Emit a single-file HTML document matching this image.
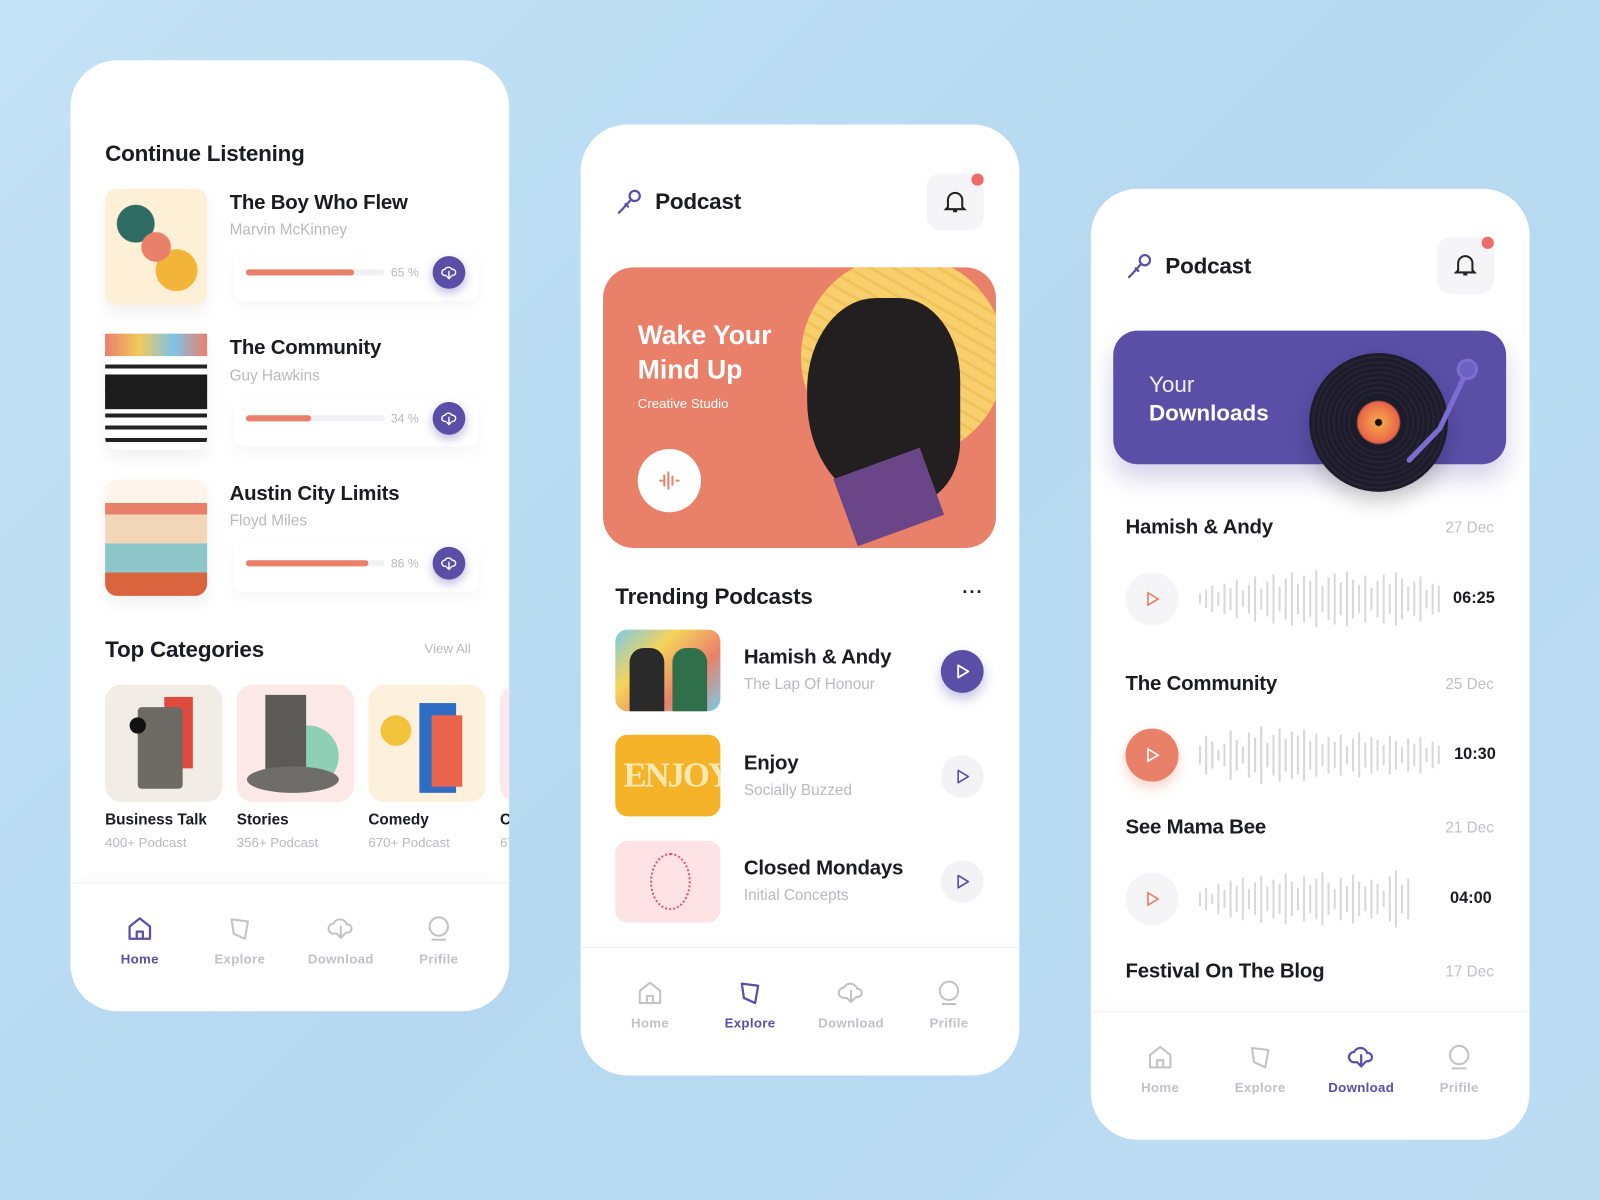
<!DOCTYPE html>
<html><head><meta charset="utf-8"><style>
*{margin:0;padding:0;box-sizing:border-box}
html,body{width:1600px;height:1200px;overflow:hidden}
body{background:linear-gradient(135deg,#c3e2f5,#b6d9f1 50%,#bcdcf2);font-family:"Liberation Sans",sans-serif;color:#1b1b22}
#w{position:absolute;left:0;top:0;width:1568px;height:1176px;transform:scale(1.0204);transform-origin:0 0}
.card{position:absolute;background:#fff;border-radius:46px;width:430px;height:932px;overflow:hidden}
.a{position:absolute}
.h{font-weight:700;font-size:22px;letter-spacing:-.2px}
.t{font-size:20px;font-weight:600;letter-spacing:-.2px}
.s{font-size:15px;color:#b9b9be}
.nav{position:absolute;left:0;right:0;bottom:0;height:126px;border-top:1px solid #f0f0f3;box-shadow:0 -6px 14px rgba(0,0,0,.025)}
.ni{position:absolute;top:30px;width:90px;margin-left:-45px;text-align:center;font-size:13px;font-weight:700;color:#c2c2c7;letter-spacing:.3px}
.ni svg{display:block;margin:0 auto 8px}
.ni.on{color:#5a4ea6}
.dl{width:32px;height:32px;border-radius:50%;background:#5a4ea6;box-shadow:0 4px 10px rgba(90,78,166,.4)}
.dl svg{margin:8px}
.bar{height:6px;border-radius:3px;background:#f1f1f3;width:136px}
.bar i{display:block;height:6px;border-radius:3px;background:#e9806a}
.pb{width:42px;height:42px;border-radius:50%;background:#f3f3f6}
.bell{width:56px;height:56px;border-radius:14px;background:#f5f5f7}
.dot{width:12px;height:12px;border-radius:50%;background:#f06a6a}
.date{font-size:15px;color:#c0c0c5;text-align:right;width:80px}
</style></head><body><div id="w">

<!-- CARD 1 -->
<div class="card" style="left:69px;top:59px">
 <div class="a h" style="left:34px;top:79px">Continue Listening</div>
 <div class="a" style="left:34px;top:126px;width:100px;height:114px;border-radius:12px;background:radial-gradient(circle at 50% 50%,#e9806a 0 14px,transparent 15px),radial-gradient(circle at 30% 30%,#2e6b63 0 18px,transparent 19px),radial-gradient(circle at 70% 70%,#f2b53a 0 20px,transparent 21px),#fdf0d6;box-shadow:0 8px 16px rgba(0,0,0,.06)"></div>
 <div class="a t" style="left:156px;top:129px">The Boy Who Flew</div>
 <div class="a s" style="left:156px;top:158px">Marvin McKinney</div>
 <div class="a" style="left:160px;top:186px;width:240px;height:50px;border-radius:10px;box-shadow:0 6px 16px rgba(0,0,0,.04)"></div>
 <div class="a bar" style="left:172px;top:205px"><i style="width:106px"></i></div>
 <div class="a s" style="left:314px;top:201px;font-size:12px">65 %</div>
 <div class="a dl" style="left:355px;top:192px"><svg width="16" height="16" viewBox="0 0 16 16" fill="none" stroke="#fff" stroke-width="1.4" stroke-linecap="round"><path d="M5 11H4a3 3 0 010-6 4 4 0 017 0 3 3 0 011 6h-1M8 7v7M6 12l2 2 2-2"/></svg></div>
 <div class="a" style="left:34px;top:268px;width:100px;height:114px;border-radius:12px;background:repeating-linear-gradient(0deg,#fff 0 8px,#222 8px 12px),#fff;box-shadow:0 8px 16px rgba(0,0,0,.06)"><div style="position:absolute;left:0;right:0;top:40px;height:34px;background:#1c1c1c"></div><div style="position:absolute;left:0;right:0;top:0;height:22px;background:linear-gradient(90deg,#e9806a,#f2c95b,#7dc4e8,#e9806a)"></div></div>
 <div class="a t" style="left:156px;top:271px">The Community</div>
 <div class="a s" style="left:156px;top:301px">Guy Hawkins</div>
 <div class="a" style="left:160px;top:329px;width:240px;height:50px;border-radius:10px;box-shadow:0 6px 16px rgba(0,0,0,.04)"></div>
 <div class="a bar" style="left:172px;top:348px"><i style="width:64px"></i></div>
 <div class="a s" style="left:314px;top:344px;font-size:12px">34 %</div>
 <div class="a dl" style="left:355px;top:335px"><svg width="16" height="16" viewBox="0 0 16 16" fill="none" stroke="#fff" stroke-width="1.4" stroke-linecap="round"><path d="M5 11H4a3 3 0 010-6 4 4 0 017 0 3 3 0 011 6h-1M8 7v7M6 12l2 2 2-2"/></svg></div>
 <div class="a" style="left:34px;top:411px;width:100px;height:114px;border-radius:12px;background:linear-gradient(180deg,#fff5ea 0 20%,#e9806a 20% 30%,#f2d6b8 30% 55%,#8cc6c8 55% 80%,#d9643e 80%);box-shadow:0 8px 16px rgba(0,0,0,.06)"></div>
 <div class="a t" style="left:156px;top:414px">Austin City Limits</div>
 <div class="a s" style="left:156px;top:443px">Floyd Miles</div>
 <div class="a" style="left:160px;top:471px;width:240px;height:50px;border-radius:10px;box-shadow:0 6px 16px rgba(0,0,0,.04)"></div>
 <div class="a bar" style="left:172px;top:490px"><i style="width:120px"></i></div>
 <div class="a s" style="left:314px;top:486px;font-size:12px">86 %</div>
 <div class="a dl" style="left:355px;top:477px"><svg width="16" height="16" viewBox="0 0 16 16" fill="none" stroke="#fff" stroke-width="1.4" stroke-linecap="round"><path d="M5 11H4a3 3 0 010-6 4 4 0 017 0 3 3 0 011 6h-1M8 7v7M6 12l2 2 2-2"/></svg></div>
 <div class="a h" style="left:34px;top:565px">Top Categories</div>
 <div class="a s" style="left:347px;top:569px;font-size:13px">View All</div>
 <div class="a" style="left:34px;top:612px;width:115px;height:115px;border-radius:16px;background:#f1ece6"><div style="position:absolute;left:58px;top:12px;width:28px;height:70px;background:#e04a3c"></div><div style="position:absolute;left:32px;top:22px;width:44px;height:80px;background:#6d6a66;border-radius:4px"></div><div style="position:absolute;left:24px;top:32px;width:16px;height:16px;border-radius:50%;background:#111"></div></div>
 <div class="a" style="left:163px;top:612px;width:115px;height:115px;border-radius:16px;background:#fde8e8"><div style="position:absolute;left:40px;top:40px;width:60px;height:60px;border-radius:50%;background:#8fcfb8"></div><div style="position:absolute;left:28px;top:10px;width:40px;height:80px;background:#5c5a57"></div><div style="position:absolute;left:10px;top:80px;width:90px;height:26px;border-radius:50%;background:#6f6d6a"></div></div>
 <div class="a" style="left:292px;top:612px;width:115px;height:115px;border-radius:16px;background:#fdf1dd"><div style="position:absolute;left:50px;top:18px;width:36px;height:88px;background:#2f6dc4"></div><div style="position:absolute;left:62px;top:30px;width:30px;height:70px;background:#e9644a"></div><div style="position:absolute;left:12px;top:30px;width:30px;height:30px;border-radius:50%;background:#f2c23a"></div></div>
 <div class="a" style="left:421px;top:612px;width:115px;height:115px;border-radius:16px;background:#fde8ec"></div>
 <div class="a" style="left:34px;top:736px;font-size:15px;font-weight:600">Business Talk</div>
 <div class="a" style="left:163px;top:736px;font-size:15px;font-weight:600">Stories</div>
 <div class="a" style="left:292px;top:736px;font-size:15px;font-weight:600">Comedy</div>
 <div class="a" style="left:421px;top:736px;font-size:15px;font-weight:600">C</div>
 <div class="a s" style="left:34px;top:759px;font-size:13px">400+ Podcast</div>
 <div class="a s" style="left:163px;top:759px;font-size:13px">356+ Podcast</div>
 <div class="a s" style="left:292px;top:759px;font-size:13px">670+ Podcast</div>
 <div class="a s" style="left:421px;top:759px;font-size:13px">67</div>
 <div class="nav">
  <div class="ni on" style="left:68px"><svg width="28" height="28" viewBox="0 0 28 28" fill="none" stroke="#5a4ea6" stroke-width="2.2" stroke-linejoin="round"><path d="M4 12L14 4l10 8v12H4z"/><path d="M11 24v-7h6v7"/></svg>Home</div>
  <div class="ni" style="left:166px"><svg width="28" height="28" viewBox="0 0 28 28" fill="none" stroke="#c2c2c7" stroke-width="2" stroke-linejoin="round"><path d="M6 5l16 2-3 17-11-5z"/></svg>Explore</div>
  <div class="ni" style="left:265px"><svg width="28" height="28" viewBox="0 0 28 28" fill="none" stroke="#c2c2c7" stroke-width="2" stroke-linecap="round"><path d="M9 19H7a5 5 0 010-10 7 7 0 0113 1 4 4 0 011 8h-2"/><path d="M14 12v11M10 19l4 4 4-4"/></svg>Download</div>
  <div class="ni" style="left:361px"><svg width="28" height="28" viewBox="0 0 28 28" fill="none" stroke="#c2c2c7" stroke-width="2"><circle cx="14" cy="12" r="9"/><path d="M7 25h14"/></svg>Prifile</div>
 </div>
</div>

<!-- CARD 2 -->
<div class="card" style="left:569px;top:122px">
 <svg class="a" style="left:34px;top:62px" width="28" height="28" viewBox="0 0 28 28" fill="none" stroke="#5a4ea6" stroke-width="2.2" stroke-linecap="round"><circle cx="19" cy="8" r="5"/><path d="M15.5 11.5L6 22M5 23l-1.5 1.5M10 16l2.5 2.5"/></svg>
 <div class="a h" style="left:73px;top:63px">Podcast</div>
 <div class="a bell" style="left:339px;top:48px"><svg style="margin:15px" width="26" height="26" viewBox="0 0 26 26" fill="none" stroke="#222" stroke-width="2"><path d="M6 18V11a7 7 0 0114 0v7l2 2H4z M11 22h4"/></svg></div>
 <div class="a dot" style="left:383px;top:48px"></div>
 <div class="a" style="left:22px;top:140px;width:385px;height:275px;border-radius:30px;background:#e9806a;overflow:hidden">
  <div style="position:absolute;left:194px;top:-12px;width:200px;height:200px;border-radius:50%;background:repeating-linear-gradient(30deg,#f7cf6d 0 8px,#f4c25a 8px 11px)"></div>
  <div style="position:absolute;left:200px;top:30px;width:150px;height:200px;border-radius:45% 40% 30% 50%;background:#231f20"></div>
  <div style="position:absolute;left:235px;top:190px;width:90px;height:70px;background:#6a4587;transform:rotate(-20deg)"></div>
  <div style="position:absolute;left:34px;top:49px;color:#fff;font-size:26px;font-weight:700;line-height:34px">Wake Your<br>Mind Up</div>
  <div style="position:absolute;left:34px;top:126px;color:#fff;font-size:13px">Creative Studio</div>
  <div style="position:absolute;left:34px;top:178px;width:62px;height:62px;border-radius:50%;background:#fff"><svg style="margin:19px" width="24" height="24" viewBox="0 0 24 24" fill="none" stroke="#e9806a" stroke-width="2" stroke-linecap="round"><path d="M3 12h2M7 7v10M11 4v16M15 8v8M19 12h2"/></svg></div>
 </div>
 <div class="a h" style="left:34px;top:450px">Trending Podcasts</div>
 <div class="a" style="left:374px;top:448px;font-size:18px;font-weight:700;letter-spacing:1px">···</div>
 <div class="a" style="left:34px;top:495px;width:103px;height:80px;border-radius:12px;background:linear-gradient(135deg,#7ccbe8,#f5d45a,#e9806a,#7ccbe8)"><div style="position:absolute;left:14px;top:18px;width:34px;height:62px;background:#2a2a2a;border-radius:14px 14px 0 0"></div><div style="position:absolute;left:56px;top:18px;width:34px;height:62px;background:#2f6f4a;border-radius:14px 14px 0 0"></div></div>
 <div class="a t" style="left:160px;top:511px">Hamish &amp; Andy</div>
 <div class="a s" style="left:160px;top:540px">The Lap Of Honour</div>
 <div class="a pb" style="left:353px;top:515px;background:#5a4ea6;box-shadow:0 6px 12px rgba(90,78,166,.35)"><svg style="margin:13px" width="16" height="16" viewBox="0 0 16 16" fill="none" stroke="#fff" stroke-width="1.8" stroke-linejoin="round"><path d="M4 2l10 6-10 6z"/></svg></div>
 <div class="a" style="left:34px;top:598px;width:103px;height:80px;border-radius:12px;background:#f5b32a;overflow:hidden"><div style="position:absolute;left:8px;top:22px;font-family:'Liberation Serif',serif;font-size:34px;font-weight:700;color:#fde9b0;letter-spacing:-2px">ENJOY</div></div>
 <div class="a t" style="left:160px;top:615px">Enjoy</div>
 <div class="a s" style="left:160px;top:644px">Socially Buzzed</div>
 <div class="a pb" style="left:353px;top:618px"><svg style="margin:13px" width="16" height="16" viewBox="0 0 16 16" fill="none" stroke="#5a4ea6" stroke-width="1.6" stroke-linejoin="round"><path d="M4 2l10 6-10 6z"/></svg></div>
 <div class="a" style="left:34px;top:702px;width:103px;height:80px;border-radius:12px;background:#fde2e6"><div style="position:absolute;left:34px;top:12px;width:40px;height:56px;border-radius:50%;border:2px dotted #e05a6a"></div></div>
 <div class="a t" style="left:160px;top:718px">Closed Mondays</div>
 <div class="a s" style="left:160px;top:747px">Initial Concepts</div>
 <div class="a pb" style="left:353px;top:721px"><svg style="margin:13px" width="16" height="16" viewBox="0 0 16 16" fill="none" stroke="#5a4ea6" stroke-width="1.6" stroke-linejoin="round"><path d="M4 2l10 6-10 6z"/></svg></div>
 <div class="nav">
  <div class="ni" style="left:68px"><svg width="28" height="28" viewBox="0 0 28 28" fill="none" stroke="#c2c2c7" stroke-width="2" stroke-linejoin="round"><path d="M4 12L14 4l10 8v12H4z"/><path d="M11 24v-7h6v7"/></svg>Home</div>
  <div class="ni on" style="left:166px"><svg width="28" height="28" viewBox="0 0 28 28" fill="none" stroke="#5a4ea6" stroke-width="2.2" stroke-linejoin="round"><path d="M6 5l16 2-3 17-11-5z"/></svg>Explore</div>
  <div class="ni" style="left:265px"><svg width="28" height="28" viewBox="0 0 28 28" fill="none" stroke="#c2c2c7" stroke-width="2" stroke-linecap="round"><path d="M9 19H7a5 5 0 010-10 7 7 0 0113 1 4 4 0 011 8h-2"/><path d="M14 12v11M10 19l4 4 4-4"/></svg>Download</div>
  <div class="ni" style="left:361px"><svg width="28" height="28" viewBox="0 0 28 28" fill="none" stroke="#c2c2c7" stroke-width="2"><circle cx="14" cy="12" r="9"/><path d="M7 25h14"/></svg>Prifile</div>
 </div>
</div>

<!-- CARD 3 -->
<div class="card" style="left:1069px;top:185px">
 <svg class="a" style="left:34px;top:62px" width="28" height="28" viewBox="0 0 28 28" fill="none" stroke="#5a4ea6" stroke-width="2.2" stroke-linecap="round"><circle cx="19" cy="8" r="5"/><path d="M15.5 11.5L6 22M5 23l-1.5 1.5M10 16l2.5 2.5"/></svg>
 <div class="a h" style="left:73px;top:63px">Podcast</div>
 <div class="a bell" style="left:339px;top:47px"><svg style="margin:15px" width="26" height="26" viewBox="0 0 26 26" fill="none" stroke="#222" stroke-width="2"><path d="M6 18V11a7 7 0 0114 0v7l2 2H4z M11 22h4"/></svg></div>
 <div class="a dot" style="left:383px;top:47px"></div>
 <div class="a" style="left:22px;top:139px;width:385px;height:131px;border-radius:24px;background:#5a4ea6;box-shadow:0 14px 24px rgba(90,78,166,.25)"></div>
 <div class="a" style="left:57px;top:178px;color:#fff;font-size:22px;line-height:28px"><span style="opacity:.9">Your</span><br><b>Downloads</b></div>
 <div class="a" style="left:214px;top:161px;width:136px;height:136px;border-radius:50%;background:repeating-radial-gradient(circle,#1e1c2a 0 3px,#262434 3px 5px);box-shadow:0 10px 20px rgba(0,0,0,.2)"><div style="position:absolute;left:40px;top:40px;width:56px;height:56px;border-radius:50%;background:radial-gradient(circle,#111 0 3px,#f3a04a 4px,#e9644a 20px,#1c1b2a 22px)"></div></div>
 <svg class="a" style="left:300px;top:160px" width="80" height="110" viewBox="0 0 80 110" fill="none" stroke="#7a6fd0" stroke-width="5" stroke-linecap="round"><path d="M68 20L42 75 L12 106"/><circle cx="69" cy="17" r="9" fill="#6d62c3" stroke="#7a6fd0" stroke-width="3"/></svg>
 <div class="a t" style="left:34px;top:321px">Hamish &amp; Andy</div>
 <div class="a date" style="left:315px;top:324px">27 Dec</div>
 <div class="a" style="left:34px;top:376px;width:52px;height:52px;border-radius:50%;background:#f5f5f7"><svg style="margin:18px" width="16" height="16" viewBox="0 0 16 16" fill="none" stroke="#e9806a" stroke-width="1.6"><path d="M4 2l10 6-10 6z"/></svg></div>
 <svg class="a" style="left:105px;top:372px" width="240" height="60"><path stroke="#d8d8dc" stroke-width="2" d="M2 25v10M8 21v18M14 17v26M20 23v14M26 15v30M32 19v22M38 11v38M44 22v16M50 16v28M56 8v44M62 20v20M68 13v34M74 6v48M80 18v24M86 10v40M92 4v52M98 15v30M104 7v46M110 12v36M116 2v56M122 17v26M128 9v42M134 5v50M140 14v32M146 3v54M152 11v38M158 16v28M164 7v46M170 19v22M176 12v36M182 6v48M188 15v30M194 4v52M200 10v40M206 18v24M212 13v34M218 8v44M224 21v18M230 15v30M236 17v26"/></svg>
 <div class="a" style="left:355px;top:393px;font-size:16px;font-weight:700">06:25</div>
 <div class="a t" style="left:34px;top:474px">The Community</div>
 <div class="a date" style="left:315px;top:477px">25 Dec</div>
 <div class="a" style="left:34px;top:529px;width:52px;height:52px;border-radius:50%;background:#e9806a;box-shadow:0 6px 12px rgba(233,128,106,.35)"><svg style="margin:18px" width="16" height="16" viewBox="0 0 16 16" fill="none" stroke="#fff" stroke-width="1.6"><path d="M4 2l10 6-10 6z"/></svg></div>
 <svg class="a" style="left:105px;top:525px" width="240" height="60"><defs><clipPath id="c1"><rect x="0" y="0" width="108" height="60"/></clipPath></defs><path id="wv" stroke="#d8d8dc" stroke-width="2" d="M2 21v18M8 11v38M14 17v26M20 25v10M26 19v22M32 6v48M38 15v30M44 22v16M50 8v44M56 13v34M62 2v56M68 18v24M74 10v40M80 4v52M86 14v32M92 7v46M98 11v38M104 5v50M110 16v28M116 9v42M122 19v22M128 12v36M134 17v26M140 10v40M146 21v18M152 14v32M158 8v44M164 18v24M170 12v36M176 15v30M182 20v20M188 11v38M194 16v28M200 22v16M206 14v32M212 19v22M218 12v36M224 23v14M230 17v26M236 21v18"/><use href="#wv" stroke="#e9806a" clip-path="url(#c1)"/></svg>
 <div class="a" style="left:356px;top:546px;font-size:16px;font-weight:700">10:30</div>
 <div class="a t" style="left:34px;top:615px">See Mama Bee</div>
 <div class="a date" style="left:315px;top:618px">21 Dec</div>
 <div class="a" style="left:34px;top:670px;width:52px;height:52px;border-radius:50%;background:#f5f5f7"><svg style="margin:18px" width="16" height="16" viewBox="0 0 16 16" fill="none" stroke="#e9806a" stroke-width="1.6"><path d="M4 2l10 6-10 6z"/></svg></div>
 <svg class="a" style="left:105px;top:666px" width="220" height="60"><path stroke="#d8d8dc" stroke-width="2" d="M2 23v14M8 19v22M14 25v10M20 15v30M26 21v18M32 12v36M38 17v26M44 9v42M50 20v20M56 14v32M62 7v46M68 18v24M74 11v38M80 15v30M86 5v50M92 13v34M98 19v22M104 8v44M110 16v28M116 10v40M122 4v52M128 14v32M134 20v20M140 9v42M146 17v26M152 6v48M158 13v34M164 18v24M170 11v38M176 15v30M182 22v16M188 8v44M194 2v56M200 16v28M206 10v40"/></svg>
 <div class="a" style="left:352px;top:687px;font-size:16px;font-weight:700">04:00</div>
 <div class="a t" style="left:34px;top:756px">Festival On The Blog</div>
 <div class="a date" style="left:315px;top:759px">17 Dec</div>
 <div class="nav">
  <div class="ni" style="left:68px"><svg width="28" height="28" viewBox="0 0 28 28" fill="none" stroke="#c2c2c7" stroke-width="2" stroke-linejoin="round"><path d="M4 12L14 4l10 8v12H4z"/><path d="M11 24v-7h6v7"/></svg>Home</div>
  <div class="ni" style="left:166px"><svg width="28" height="28" viewBox="0 0 28 28" fill="none" stroke="#c2c2c7" stroke-width="2" stroke-linejoin="round"><path d="M6 5l16 2-3 17-11-5z"/></svg>Explore</div>
  <div class="ni on" style="left:265px"><svg width="28" height="28" viewBox="0 0 28 28" fill="none" stroke="#5a4ea6" stroke-width="2.2" stroke-linecap="round"><path d="M9 19H7a5 5 0 010-10 7 7 0 0113 1 4 4 0 011 8h-2"/><path d="M14 12v11M10 19l4 4 4-4"/></svg>Download</div>
  <div class="ni" style="left:361px"><svg width="28" height="28" viewBox="0 0 28 28" fill="none" stroke="#c2c2c7" stroke-width="2"><circle cx="14" cy="12" r="9"/><path d="M7 25h14"/></svg>Prifile</div>
 </div>
</div>
</div></body></html>
